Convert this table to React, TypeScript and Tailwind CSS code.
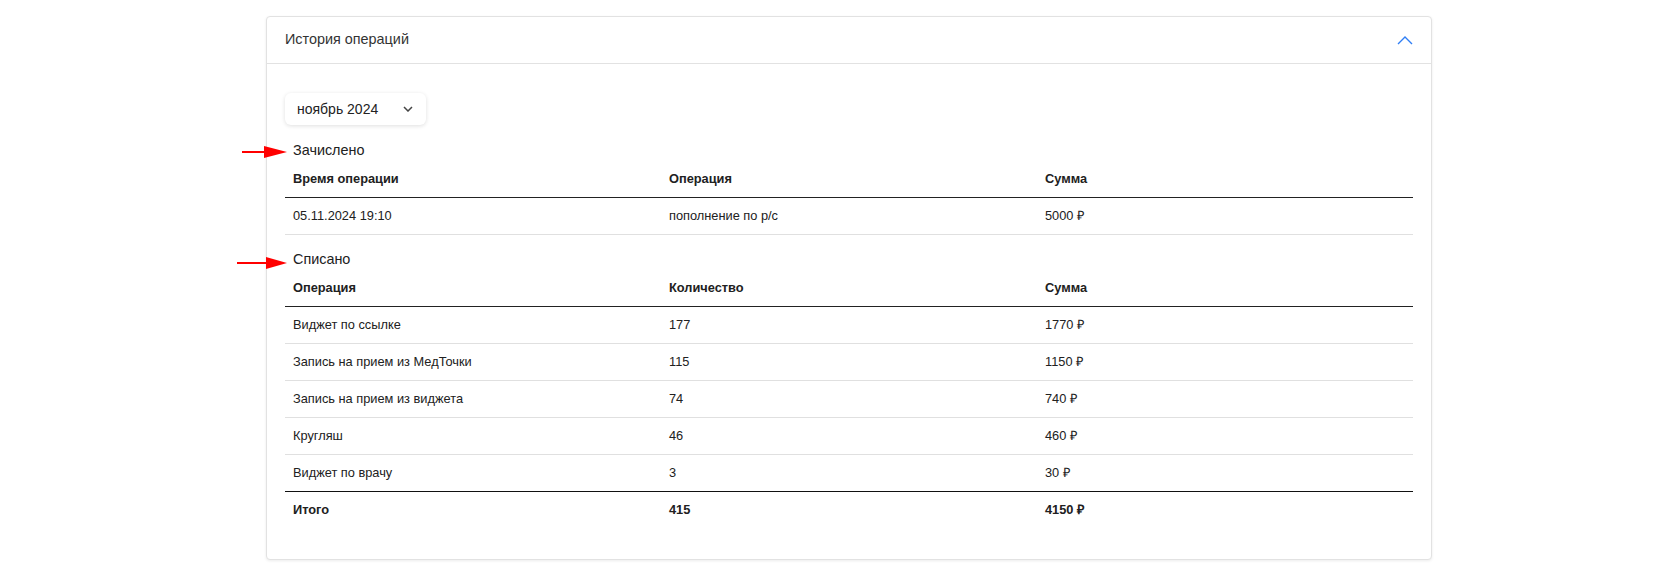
const credited = [{ time: '05.11.2024 19:10', op: 'пополнение по р/с', sum: '5000 ₽' }]

const debited = [
  { op: 'Виджет по ссылке', qty: '177', sum: '1770 ₽' },
  { op: 'Запись на прием из МедТочки', qty: '115', sum: '1150 ₽' },
  { op: 'Запись на прием из виджета', qty: '74', sum: '740 ₽' },
  { op: 'Кругляш', qty: '46', sum: '460 ₽' },
  { op: 'Виджет по врачу', qty: '3', sum: '30 ₽' },
]

// red annotation arrow drawn over the page
function Arrow({ left, top, width, headStart }: { left: number; top: number; width: number; headStart: number }) {
  return (
    <svg
      className="absolute"
      style={{ left, top }}
      width={width}
      height={14}
      viewBox={`0 0 ${width} 14`}
    >
      <line x1={0} y1={7} x2={headStart + 1} y2={7} stroke="#ff0000" strokeWidth={2} />
      <polygon points={`${headStart},1 ${width},7 ${headStart},13`} fill="#ff0000" />
    </svg>
  )
}

function HeadRow({ cols }: { cols: string[] }) {
  return (
    <div className="grid grid-cols-3 h-[37px] items-center border-b border-[#222]">
      {cols.map((c) => (
        <div key={c} className="px-2 font-bold">
          {c}
        </div>
      ))}
    </div>
  )
}

function Row({ cells, last }: { cells: string[]; last?: boolean }) {
  return (
    <div
      className={
        last
          ? 'grid grid-cols-3 h-[37px] items-center border-b border-[#111]'
          : 'grid grid-cols-3 h-[37px] items-center border-b border-[#e0e0e0]'
      }
    >
      {cells.map((c, i) => (
        <div key={i} className="px-2">
          {c}
        </div>
      ))}
    </div>
  )
}

export default function App() {
  return (
    <div className="relative min-h-screen bg-white text-[#212121] font-['Liberation_Sans',Arial,sans-serif]">
      <div className="pt-4 pl-[266px]">
        <div className="w-[1166px] rounded border border-[#e2e2e2] bg-white shadow-[0_1px_3px_rgba(0,0,0,0.08)]">
          {/* header */}
          <div className="h-[47px] flex items-center justify-between pl-[18px] pr-[18px] border-b border-[#e2e2e2]">
            <span className="text-[14.4px] text-[#333]">История операций</span>
            <svg width="16" height="9" viewBox="0 0 16 9" fill="none">
              <path d="M1 8L8 1l7 7" stroke="#2f7ef5" strokeWidth="1.4" />
            </svg>
          </div>

          {/* body */}
          <div className="px-[18px] pt-[29px] pb-[31px]">
            <button className="h-8 w-[141px] flex items-center justify-between pl-3 pr-[13px] rounded-md bg-white shadow-[0_1px_4px_rgba(0,0,0,0.13)] text-[14px] text-[#222]">
              <span>ноябрь 2024</span>
              <svg width="10" height="6" viewBox="0 0 10 6" fill="none">
                <path d="M1 1l4 4 4-4" stroke="#444" strokeWidth="1.5" />
              </svg>
            </button>

            <div className="mt-[15px] pl-2 leading-[21px] text-[14.4px]">Зачислено</div>
            <div className="text-[12.8px]">
              <HeadRow cols={['Время операции', 'Операция', 'Сумма']} />
              {credited.map((r) => (
                <Row key={r.time} cells={[r.time, r.op, r.sum]} />
              ))}
            </div>

            <div className="mt-[14px] pl-2 leading-[21px] text-[14.4px]">Списано</div>
            <div className="text-[12.8px]">
              <HeadRow cols={['Операция', 'Количество', 'Сумма']} />
              {debited.map((r, i) => (
                <Row key={r.op} cells={[r.op, r.qty, r.sum]} last={i === debited.length - 1} />
              ))}
              <div className="grid grid-cols-3 h-9 items-center font-bold">
                <div className="px-2">Итого</div>
                <div className="px-2">415</div>
                <div className="px-2">4150 ₽</div>
              </div>
            </div>
          </div>
        </div>
      </div>

      <Arrow left={242} top={145} width={45} headStart={22} />
      <Arrow left={237} top={256} width={50} headStart={29} />
    </div>
  )
}
